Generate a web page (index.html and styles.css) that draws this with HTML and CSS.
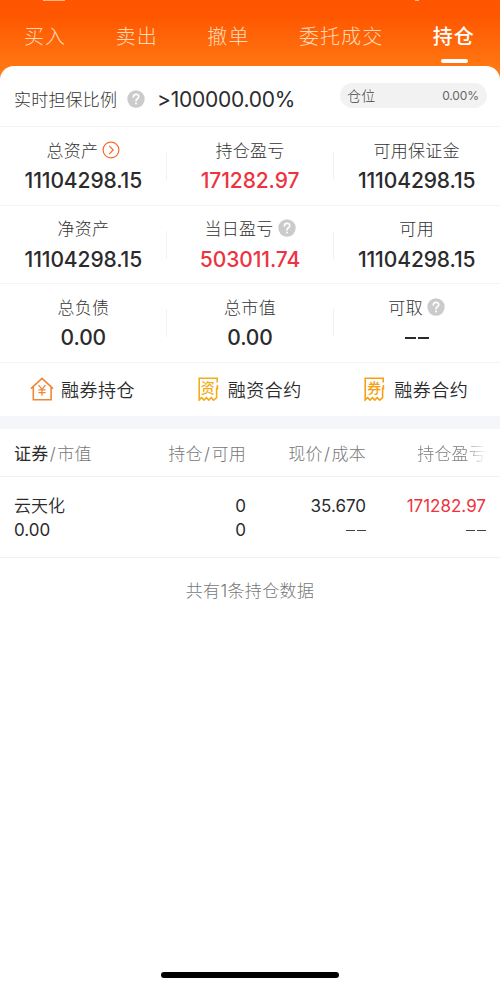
FILE: index.html
```html
<!DOCTYPE html>
<html lang="zh-CN">
<head>
<meta charset="utf-8">
<title>持仓</title>
<link rel="stylesheet" href="styles.css">
</head>
<body>
<svg class="defs" width="0" height="0" aria-hidden="true">
  <symbol id="help" viewBox="0 0 18 18">
    <circle cx="9" cy="9" r="8.7" fill="#cbcbcb"/>
    <path d="M6.3 7.1C6.3 3.5 11.8 3.5 11.8 6.8C11.8 8.7 9 8.8 9 10.9" fill="none" stroke="#fff" stroke-width="1.6" stroke-linecap="round"/>
    <circle cx="9" cy="13.4" r="1" fill="#fff"/>
  </symbol>
  <symbol id="receipt" viewBox="0 0 21 25">
    <path d="M19.2 5.4V1.2H1.2V22.9L3.6 20.7L6 23.1L8.4 20.7L10.8 23.1L13.2 20.7L15.6 23.1L18.6 20.7V10.5M19.4 8V12.4" fill="none" stroke="currentColor" stroke-width="1.6"/>
  </symbol>
</svg>
<header class="top">
  <i class="status-a"></i><i class="status-b"></i>
  <nav class="tabs">
    <a class="tab">买入</a>
    <a class="tab">卖出</a>
    <a class="tab">撤单</a>
    <a class="tab">委托成交</a>
    <a class="tab active">持仓</a>
  </nav>
</header>
<main class="card">
  <section class="ratio">
    <span class="ratio-label">实时担保比例</span>
    <svg class="help"><use href="#help"/></svg>
    <span class="ratio-value">&gt;100000.00%</span>
    <div class="position"><span>仓位</span><span class="num">0.00%</span></div>
  </section>
  <section class="stats">
    <div class="stat"><div class="label">总资产<svg class="go" viewBox="0 0 18 18"><circle cx="9" cy="9" r="7.9"/><path d="M7.2 4.9L11.2 9L7.2 13.1"/></svg></div><div class="value">11104298.15</div></div>
    <div class="stat"><div class="label">持仓盈亏</div><div class="value red">171282.97</div></div>
    <div class="stat"><div class="label">可用保证金</div><div class="value">11104298.15</div></div>
  </section>
  <section class="stats">
    <div class="stat"><div class="label">净资产</div><div class="value">11104298.15</div></div>
    <div class="stat"><div class="label">当日盈亏<svg class="help"><use href="#help"/></svg></div><div class="value red">503011.74</div></div>
    <div class="stat"><div class="label">可用</div><div class="value">11104298.15</div></div>
  </section>
  <section class="stats">
    <div class="stat"><div class="label">总负债</div><div class="value">0.00</div></div>
    <div class="stat"><div class="label">总市值</div><div class="value">0.00</div></div>
    <div class="stat"><div class="label">可取<svg class="help"><use href="#help"/></svg></div><div class="value"><span class="dash"></span></div></div>
  </section>
  <section class="actions">
    <a class="action"><svg class="house" viewBox="0 0 24 24"><path d="M.9 11.7L12 1.3L23.1 11.7M3.3 9.6V22.7H21.1V9.6" stroke-width="1.6"/><path d="M8.6 8.2L12 12.4L15.4 8.2M12 12.4V18.8M8.4 12.8H15.6M8.4 15.7H15.6" stroke-width="1.3"/></svg>融券持仓</a>
    <a class="action"><span class="ticket gold"><svg><use href="#receipt"/></svg><b>资</b></span>融资合约</a>
    <a class="action"><span class="ticket amber"><svg><use href="#receipt"/></svg><b>券</b></span>融券合约</a>
  </section>
  <section class="holdings">
    <div class="row head"><span><em>证券</em><i>/</i>市值</span><span>持仓<i>/</i>可用</span><span>现价<i>/</i>成本</span><span class="fade">持仓盈亏</span></div>
    <div class="row item">
      <div><p class="name">云天化</p><p>0.00</p></div>
      <div><p>0</p><p>0</p></div>
      <div><p>35.670</p><p><span class="dash small"></span></p></div>
      <div><p class="red">171282.97</p><p><span class="dash small"></span></p></div>
    </div>
    <p class="summary">共有1条持仓数据</p>
  </section>
</main>
<div class="home-bar"></div>
</body>
</html>
```

FILE: styles.css
```css
* { box-sizing: border-box; }
body {
  margin: 0;
  height: 989px;
  display: flex;
  flex-direction: column;
  position: relative;
  overflow: hidden;
  background: #fff;
  color: #2b2b2d;
  font-family: Inter, "Noto Sans CJK SC", sans-serif;
}
p { margin: 0; }
.defs { position: absolute; }
.top {
  position: relative;
  flex: none;
  height: 82px;
  background: linear-gradient(#ff5500 0, #ff5701 16px, #ff7a14 72px);
}
.status-a, .status-b { position: absolute; top: 0; background: #ffb48a; }
.status-a { left: 43px; width: 22px; height: 1px; }
.status-b { left: 415px; width: 4px; height: 1px; }
.tabs {
  display: flex;
  justify-content: space-between;
  padding: 22px 26px 0 24px;
}
.tab {
  position: relative;
  height: 44px;
  line-height: 30px;
  font-size: 20px;
  font-weight: 300;
  letter-spacing: 1.1px;
  margin-right: -1px;
  color: #ffd9b4;
}
.tab.active { color: #fff; font-weight: 500; }
.tab.active::after {
  content: "";
  position: absolute;
  left: 8px;
  top: 37px;
  width: 27px;
  height: 4px;
  border-radius: 2px;
  background: #fff;
}
.card {
  position: relative;
  flex: 1;
  margin-top: -16px;
  border-radius: 14px 14px 0 0;
  background: #fff;
}
.ratio {
  display: flex;
  align-items: center;
  height: 61px;
  padding: 6px 14px 0;
  border-bottom: 1px solid #f4f4f4;
}
.ratio-label { width: 113px; margin-top: -2px; font-size: 17px; font-weight: 300; letter-spacing: .2px; color: #333; white-space: nowrap; }
.help { width: 18px; height: 18px; flex: none; }
.ratio-value { margin-left: 12px; font-size: 21px; letter-spacing: -.25px; }
.position {
  display: flex;
  justify-content: space-between;
  align-items: center;
  width: 147px;
  height: 25px;
  margin: -7px -1px 0 auto;
  padding: 0 8px 1px 7px;
  border-radius: 13px;
  background: #f2f2f2;
  color: #444;
  font-size: 14px;
  font-weight: 300;
  letter-spacing: .3px;
}
.position .num { font-size: 12px; font-weight: 400; letter-spacing: -.1px; color: #666; }
.stats {
  display: grid;
  grid-template-columns: repeat(3, 1fr);
  height: 78.5px;
  border-bottom: 1px solid #f4f4f4;
}
.stat { position: relative; padding-top: 9px; text-align: center; }
.stat + .stat::before {
  content: "";
  position: absolute;
  left: -.5px;
  top: 25px;
  width: 1px;
  height: 28px;
  background: #f1f1f1;
}
.label {
  display: flex;
  justify-content: center;
  align-items: center;
  height: 27px;
  padding-bottom: 1px;
  font-size: 17px;
  font-weight: 300;
  letter-spacing: .3px;
  color: #333;
}
.label svg { margin: 1px 0 0 4px; }
.go { width: 18px; height: 18px; fill: none; stroke: #f36c2d; stroke-width: 1.2; }
.value { height: 32px; line-height: 36px; font-size: 21px; font-weight: 480; letter-spacing: -.1px; }
.red { color: #ee3340; }
.dash {
  display: inline-block;
  width: 24px;
  height: 2px;
  vertical-align: 6px;
  background: linear-gradient(90deg, #2b2b2d 11px, transparent 11px, transparent 13px, #2b2b2d 13px);
}
.dash.small {
  width: 20px;
  height: 1.5px;
  vertical-align: 5px;
  background: linear-gradient(90deg, #444 9px, transparent 9px, transparent 11px, #444 11px);
}
.actions {
  display: grid;
  grid-template-columns: repeat(3, 1fr);
  height: 53px;
}
.action {
  display: flex;
  align-items: center;
  padding-left: 31px;
  font-size: 18px;
  font-weight: 350;
  letter-spacing: .5px;
}
.house { width: 24px; height: 24px; margin: 0 7px 0 -1px; fill: none; stroke: #ee8838; }
.ticket { position: relative; width: 21px; height: 25px; margin-right: 9px; }
.ticket svg { display: block; width: 21px; height: 25px; }
.ticket b { position: absolute; left: 3px; top: 3px; font-size: 14px; font-weight: 500; line-height: 16px; letter-spacing: 0; }
.gold { color: #f2ac1c; }
.amber { color: #f7a016; }
.holdings { border-top: 13px solid #f5f6f9; }
.row {
  display: grid;
  grid-template-columns: 112px 120px 120px 120px;
  padding: 0 14px;
  border-bottom: 1px solid #f2f2f2;
  text-align: right;
}
.row > :first-child { text-align: left; }
.head { height: 48px; padding-top: 1px; line-height: 48px; font-size: 17px; font-weight: 300; letter-spacing: .2px; color: #777; white-space: nowrap; }
.head em { font-style: normal; font-weight: 400; color: #2b2b2d; }
.head i { margin: 0 1.4px; font-style: normal; }
.fade { background: linear-gradient(90deg, #777 82%, #fff 101%); background-clip: text; color: transparent; }
.item { height: 81px; padding-top: 17px; font-size: 17px; line-height: 24.5px; }
.name { font-weight: 350; }
.summary { margin-top: 20px; text-align: center; font-size: 17px; font-weight: 300; letter-spacing: .35px; line-height: 26px; color: #777; }
.home-bar { position: absolute; left: 161px; top: 972px; width: 178px; height: 6px; border-radius: 3px; background: #000; }
```
